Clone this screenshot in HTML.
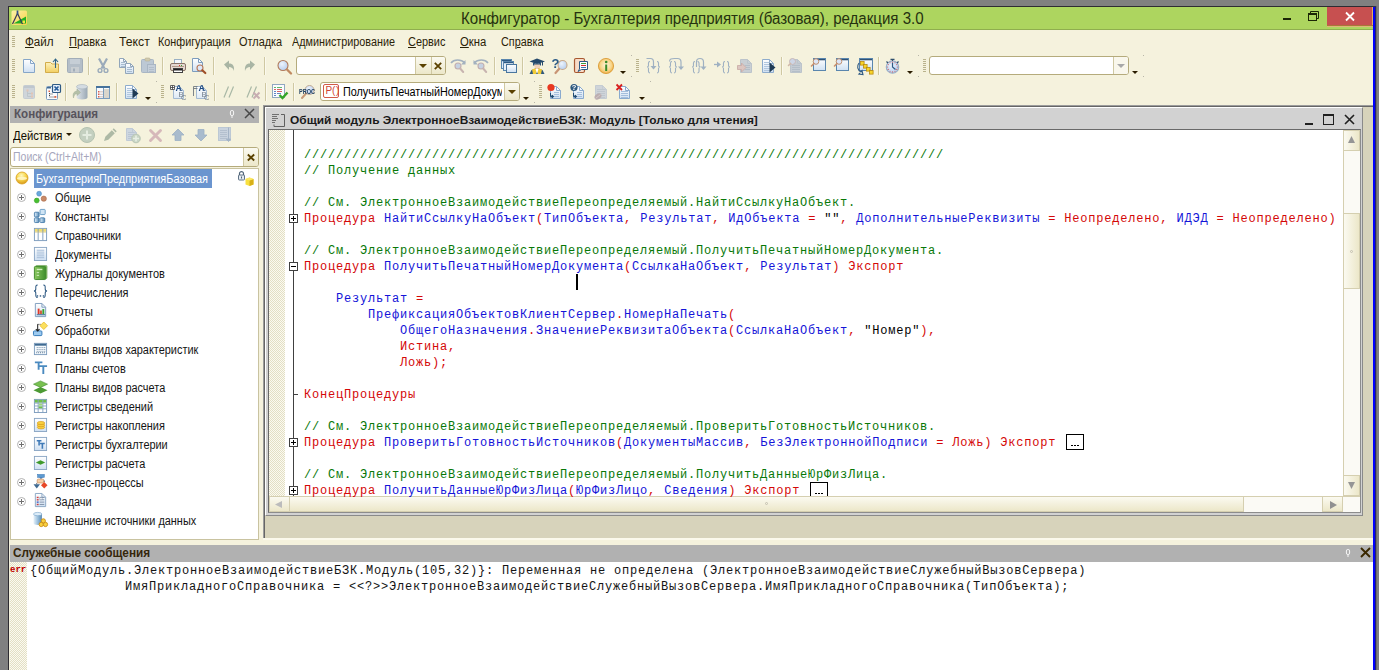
<!DOCTYPE html>
<html lang="ru">
<head>
<meta charset="utf-8">
<title>Конфигуратор</title>
<style>
*{box-sizing:border-box;margin:0;padding:0}
html,body{width:1379px;height:670px;overflow:hidden;background:#808080;font-family:"Liberation Sans",sans-serif;font-size:12px;color:#000}
div,pre,svg{position:absolute}
svg{overflow:visible}
#win{left:8px;top:6px;width:1365px;height:670px;background:#f5f2dd;border-left:1px solid #2e2c32;border-top:1px solid #2e2c32}
#blue{left:1373px;top:6px;width:2px;height:664px;border-top:1px solid #383838;background:#0000fe;box-shadow:1px 0 #24246c,2px 0 #6c6c6c}
#title{left:9px;top:7px;width:1364px;height:23px;background:#add55f;border-bottom:1px solid #8fae4e}
#title .t{left:452px;top:2px;font-size:16px;color:#263210;line-height:19px;white-space:nowrap;transform-origin:0 0;transform:scaleX(.9415)}
#close{left:1327px;top:7px;width:46px;height:18px;background:#c75050;border-right:1px solid #e0b060;box-shadow:0 1px #a87838,0 2px #e0b478}
.nx{white-space:nowrap;transform-origin:0 0;transform:scaleX(.9);line-height:14px;font-size:12px}
.menu{top:35px;color:#2a2208}
.menu u{text-decoration:underline}
.grip{width:3px;height:13px;background:repeating-linear-gradient(#b9b28c 0 1px,rgba(0,0,0,0) 1px 2px)}
.sep{width:2px;height:18px;border-left:1px solid #cfc8a2;border-right:1px solid #fbf9ee}
.dd{width:0;height:0;border-left:3px solid transparent;border-right:3px solid transparent;border-top:3px solid #2a1c00}
.dot{width:1px;height:1px;background:#b8b6a8}
.inp{background:#fff;border:1px solid #b5ab7c;border-radius:3px}
.btn{background:linear-gradient(#fbfaf1,#ece7c9);border-left:1px solid #cfc8a2}
/* left panel */
#lp-h{left:10px;top:106px;width:249px;height:17px;background:#b1b1b1}
#lp-tree{left:10px;top:168px;width:249px;height:372px;background:#fff;border:1px solid #c9c3a0}
.ti{left:55px;color:#141414}
.plus{left:17px;width:9px;height:9px;border:1px solid #b2b2b2;border-radius:50%;background:#fff}
.plus:before{content:"";position:absolute;left:1px;top:3px;width:5px;height:1px;background:#707070}
.plus:after{content:"";position:absolute;left:3px;top:1px;width:1px;height:5px;background:#707070}
/* code */
#mdi{left:263px;top:105px;width:1110px;height:433px;background:#d7d3bb;border-left:2px solid #666;border-top:2px solid #666}
#cw{left:265px;top:107px;width:1098px;height:409px;background:#d2d2d2;border-left:1px solid #fff;border-top:1px solid #fff;border-right:1px solid #8a8a8a;border-bottom:1px solid #8a8a8a}
#code{left:268px;top:129px;width:1093px;height:384px;background:#fff;border:1px solid #6a6a6a;border-right-color:#8c8c8c;border-bottom-color:#8c8c8c}
.stip{background-color:#fbfaf1;background-image:linear-gradient(45deg,#e3dfc4 25%,transparent 25%,transparent 75%,#e3dfc4 75%),linear-gradient(45deg,#e3dfc4 25%,transparent 25%,transparent 75%,#e3dfc4 75%);background-size:2px 2px;background-position:0 0,1px 1px}
#fold{left:293px;top:130px;width:1px;height:366px;background:#404040}
pre{font-family:"Liberation Mono",monospace;font-size:12px;letter-spacing:.8px;line-height:16px;white-space:pre}
#src{left:304px;top:147px}
.c{color:#087808}.k{color:#d40808}.i{color:#1414d8}.s{color:#000}
.fb{left:289px;width:9px;height:9px;border:1px solid #404040;background:#fff}
.fb:before{content:"";position:absolute;left:1px;top:3px;width:5px;height:1px;background:#000}
.fb.p:after{content:"";position:absolute;left:3px;top:1px;width:1px;height:5px;background:#000}
.dots{width:18px;height:16px;border:1px solid #000;background:#fff}
.dots:before{content:"";position:absolute;left:4px;top:10px;width:8px;height:1px;background:repeating-linear-gradient(90deg,#000 0 2px,transparent 2px 3px)}
.sbv{background:#fbfaf5;border-left:1px solid #d5cfb0}
.sbb{background:linear-gradient(90deg,#fbfaf1,#ece7c9);border:1px solid #d5cfb0}
/* bottom */
#bp-h{left:10px;top:545px;width:1363px;height:17px;background:#b1b1b1}
#bp{left:10px;top:562px;width:1363px;height:108px;background:#fff}
#msg{left:30px;top:563px;color:#141414}
</style>
</head>
<body>
<div id="win"></div>
<div id="title"><div class="t">Конфигуратор - Бухгалтерия предприятия (базовая), редакция 3.0</div></div>
<div id="close"></div>
<div id="blue"></div>

<svg width="0" height="0" style="left:0;top:0"><defs>
<linearGradient id="gp" x1="0" y1="0" x2="0" y2="1"><stop offset="0" stop-color="#ffffff"/><stop offset="1" stop-color="#cfe0f2"/></linearGradient>
<linearGradient id="gf" x1="0" y1="0" x2="0" y2="1"><stop offset="0" stop-color="#fdf2bc"/><stop offset="1" stop-color="#f2cf62"/></linearGradient>
<linearGradient id="gd" x1="0" y1="0" x2="1" y2="0"><stop offset="0" stop-color="#dfe5ea"/><stop offset="1" stop-color="#9aa8b4"/></linearGradient>
<radialGradient id="gl" cx="0.4" cy="0.35" r="0.7"><stop offset="0" stop-color="#eef4fc"/><stop offset="1" stop-color="#b5cdee"/></radialGradient>
<radialGradient id="gi" cx="0.5" cy="0.45" r="0.6"><stop offset="0" stop-color="#fff6dc"/><stop offset="0.6" stop-color="#f8d68a"/><stop offset="1" stop-color="#e8a030"/></radialGradient>
<radialGradient id="gb" cx="0.45" cy="0.3" r="0.7"><stop offset="0" stop-color="#fff8c0"/><stop offset="0.5" stop-color="#f8d850"/><stop offset="1" stop-color="#d89818"/></radialGradient>
<linearGradient id="gg" x1="0" y1="0" x2="1" y2="0"><stop offset="0" stop-color="#8cc860"/><stop offset="1" stop-color="#3f8f2c"/></linearGradient>
<linearGradient id="gc" x1="0" y1="0" x2="1" y2="0"><stop offset="0" stop-color="#e8f2fa"/><stop offset="0.5" stop-color="#9cc0dc"/><stop offset="1" stop-color="#5888b0"/></linearGradient>
<linearGradient id="gapp" x1="0" y1="0" x2="1" y2="1"><stop offset="0" stop-color="#fdf0a8"/><stop offset="1" stop-color="#f6d348"/></linearGradient>
<linearGradient id="gp2" x1="0" y1="0" x2="0" y2="1"><stop offset="0" stop-color="#ffffff"/><stop offset="1" stop-color="#dde9f5"/></linearGradient>
</defs></svg>
<svg style="left:11px;top:10px" width="16" height="15" viewBox="0 0 16 15"><rect x="0.5" y="0.5" width="15.5" height="14.5" rx="1.5" fill="url(#gapp)"/><path d="M2.5 13.5L15 6.5v7z" fill="#22b022"/><path d="M1.5 14L6.5 3.500 11.500 14" stroke="#3a3a58" stroke-width="1.200" fill="none"/><path d="M6.500 0.500v4" stroke="#30508a" stroke-width="1.700"/><rect x="11.500" y="10.500" width="2.500" height="2.500" fill="#f8e040"/></svg>
<div style="left:1283px;top:18px;width:8px;height:2px;background:#1c2606"></div>
<svg style="left:1308px;top:11px" width="11" height="10" viewBox="0 0 11 10"><path d="M2.500 2.500v-2h8v7h-2" fill="none" stroke="#1c2606"/><rect x="0.500" y="2.500" width="8" height="7" fill="none" stroke="#1c2606"/><rect x="0" y="2" width="9" height="2" fill="#1c2606"/></svg>
<svg style="left:1345px;top:12px" width="10" height="9" viewBox="0 0 10 9"><path d="M1 0.500l8 8M9 0.500l-8 8" stroke="#fff" stroke-width="1.800"/></svg>
<div class="grip" style="left:12px;top:36px;height:11px"></div>
<div class="nx menu" style="left:25px;transform:scaleX(0.97)"><u>Ф</u>айл</div>
<div class="nx menu" style="left:69px;transform:scaleX(0.92)"><u>П</u>равка</div>
<div class="nx menu" style="left:119px;transform:scaleX(1.02)">Текст</div>
<div class="nx menu" style="left:158px;transform:scaleX(0.9)">Конфигурация</div>
<div class="nx menu" style="left:239px;transform:scaleX(0.91)">Отладка</div>
<div class="nx menu" style="left:292px;transform:scaleX(0.9)">Администрирование</div>
<div class="nx menu" style="left:407.5px;transform:scaleX(0.91)"><u>С</u>ервис</div>
<div class="nx menu" style="left:459.5px;transform:scaleX(0.94)"><u>О</u>кна</div>
<div class="nx menu" style="left:500.5px;transform:scaleX(0.9)">Сп<u>р</u>авка</div>
<div class="grip" style="left:12px;top:59px"></div>
<svg style="left:21px;top:58px" width="16" height="16" viewBox="0 0 16 16"><path d="M2.5 1.5H9.5L13.5 5.5V14.5H2.5Z" fill="url(#gp)" stroke="#86a6c8" stroke-width="1"/><path d="M9.5 1.5V5.5H13.5" fill="none" stroke="#86a6c8" stroke-width="1"/></svg>
<svg style="left:44px;top:58px" width="16" height="16" viewBox="0 0 16 16"><path d="M1.5 4.500h5l1.500 1.500h6.500v8.500h-13z" fill="url(#gf)" stroke="#d2ac4a"/><path d="M11.5 10V1.5M9 4l2.5-3 2.5 3" fill="none" stroke="#2f6488" stroke-width="1.1"/></svg>
<svg style="left:67px;top:58px" width="16" height="16" viewBox="0 0 16 16"><rect x="0.5" y="0.5" width="15" height="14" rx="1" fill="#b4bec8" stroke="#a2adb8"/><rect x="3" y="1" width="10" height="5" fill="#c6ced6"/><rect x="4" y="9" width="8" height="5.5" fill="#c9ced2"/><rect x="6" y="10.5" width="2" height="3" fill="#a2adb8"/></svg>
<div class="sep" style="left:88px;top:57px"></div>
<svg style="left:95px;top:58px" width="16" height="16" viewBox="0 0 16 16"><path d="M4 0.5L9.5 10.5M12 0.5L6.5 10.5" stroke="#9aaaba" stroke-width="2.2" fill="none"/><circle cx="5" cy="12.5" r="1.9" fill="none" stroke="#9aaaba" stroke-width="1.4"/><circle cx="11" cy="12.5" r="1.9" fill="none" stroke="#9aaaba" stroke-width="1.4"/></svg>
<svg style="left:118px;top:58px" width="16" height="16" viewBox="0 0 16 16"><path d="M1.5 0.5H5.5L8.5 3.5V9.5H1.5Z" fill="url(#gp)" stroke="#92a6ba" stroke-width="1"/><path d="M5.5 0.5V3.5H8.5" fill="none" stroke="#92a6ba" stroke-width="1"/><rect x="3" y="4" width="4" height="1" fill="#a9bccf"/><rect x="3" y="6" width="4" height="1" fill="#a9bccf"/><rect x="3" y="8" width="4" height="1" fill="#a9bccf"/><path d="M7.5 5.5H12.5L15.5 8.5V15.5H7.5Z" fill="url(#gp)" stroke="#92a6ba" stroke-width="1"/><path d="M12.5 5.5V8.5H15.5" fill="none" stroke="#92a6ba" stroke-width="1"/><rect x="9" y="9" width="5" height="1" fill="#a9bccf"/><rect x="9" y="11" width="5" height="1" fill="#a9bccf"/><rect x="9" y="13" width="5" height="1" fill="#a9bccf"/></svg>
<svg style="left:141px;top:58px" width="16" height="16" viewBox="0 0 16 16"><rect x="0.5" y="1.5" width="12" height="13" rx="1" fill="#bcc8d4" stroke="#a9b6c4"/><rect x="4" y="0" width="5" height="3" rx="1" fill="#cfcab0" stroke="#b8b090" stroke-width=".6"/><rect x="6.5" y="6.5" width="8" height="8" fill="#c4ced9" stroke="#a9b6c4"/><rect x="8" y="9" width="5" height="1" fill="#b1bdca"/><rect x="8" y="11" width="5" height="1" fill="#b1bdca"/><rect x="8" y="13" width="5" height="1" fill="#b1bdca"/></svg>
<div class="sep" style="left:162px;top:57px"></div>
<svg style="left:170px;top:58px" width="16" height="16" viewBox="0 0 16 16"><rect x="4.5" y="1.5" width="7" height="5" fill="#f4f8fc" stroke="#9ab0c4"/><rect x="0.5" y="5.5" width="15" height="7" rx="1.5" fill="#e4d8d0" stroke="#8a7468"/><rect x="2" y="8" width="12" height="1" fill="#b09888"/><rect x="9" y="7" width="1" height="1" fill="#e03030"/><rect x="11" y="7" width="1" height="1" fill="#30a030"/><rect x="3.5" y="10.5" width="9" height="4" fill="#fff" stroke="#404040"/><rect x="4" y="11" width="8" height="1.5" fill="#202020"/></svg>
<svg style="left:191px;top:58px" width="16" height="16" viewBox="0 0 16 16"><path d="M1.5 0.5H7.5L11.5 4.5V13.5H1.5Z" fill="url(#gp)" stroke="#7d9cbd" stroke-width="1"/><path d="M7.5 0.5V4.5H11.5" fill="none" stroke="#7d9cbd" stroke-width="1"/><circle cx="9" cy="10" r="3" fill="#dce8f8" stroke="#b87858" stroke-width="1.1"/><path d="M11.3 12.3l3 2.700" stroke="#a05028" stroke-width="2.2" stroke-linecap="round"/></svg>
<div class="sep" style="left:213px;top:57px"></div>
<svg style="left:221px;top:58px" width="16" height="16" viewBox="0 0 16 16"><path d="M3 6.5L8 2.5v3c4 0 5.5 2.5 5 7.5-1-3-2.5-4-5-4v3z" fill="#a9b5a4"/></svg>
<svg style="left:242px;top:58px" width="16" height="16" viewBox="0 0 16 16"><path d="M13 6.5L8 2.5v3c-4 0-5.5 2.5-5 7.5 1-3 2.5-4 5-4v3z" fill="#a9b5a4"/></svg>
<div class="sep" style="left:264px;top:57px"></div>
<svg style="left:277px;top:59px" width="16" height="16" viewBox="0 0 16 16"><circle cx="6" cy="6.5" r="5" fill="url(#gl)" stroke="#b07a5c" stroke-width="1.1"/><path d="M10 10.5l4 4" stroke="#c08a62" stroke-width="2.4" stroke-linecap="round"/></svg>
<div class="inp" style="left:296px;top:56px;width:150px;height:19px"></div>
<div class="btn" style="left:415px;top:57px;width:16px;height:17px"></div><div class="btn" style="left:431px;top:57px;width:14px;height:17px;border-radius:0 2px 2px 0"></div>
<div class="dd" style="left:419px;top:64px;border-width:4px 4px 0 4px;border-top-color:#5a4100"></div>
<svg style="left:434px;top:62px" width="8" height="8" viewBox="0 0 8 8"><path d="M0.800 0.800l6.400 6.400M7.200 0.800l-6.400 6.400" stroke="#5a4100" stroke-width="1.800"/></svg>
<svg style="left:450px;top:58px" width="16" height="16" viewBox="0 0 16 16"><path d="M1 5c3-4 10-4 14 0" fill="none" stroke="#a3b1bf" stroke-width="1.6"/><path d="M15.5 2v4.5h-4.5z" fill="#a3b1bf"/><circle cx="8" cy="8" r="3" fill="#c6d2e2" stroke="#c0aeb0" stroke-width="1.1"/><path d="M10.2 10.5l3 3.5" stroke="#c8b4b0" stroke-width="2" stroke-linecap="round"/></svg>
<svg style="left:473px;top:58px" width="16" height="16" viewBox="0 0 16 16"><path d="M1 5c4-4 11-4 14 0" fill="none" stroke="#a3b1bf" stroke-width="1.6"/><path d="M0.5 2v4.5h4.5z" fill="#a3b1bf"/><circle cx="8" cy="8" r="3" fill="#c6d2e2" stroke="#c0aeb0" stroke-width="1.1"/><path d="M10.2 10.5l3 3.5" stroke="#c8b4b0" stroke-width="2" stroke-linecap="round"/></svg>
<div class="sep" style="left:494px;top:57px"></div>
<svg style="left:501px;top:58px" width="16" height="16" viewBox="0 0 16 16"><rect x="0.500" y="1.500" width="10" height="9" fill="#e2ecf6" stroke="#5a86ae"/><rect x="1" y="2" width="9" height="1.200" fill="#2f5a84"/><rect x="2.500" y="3.500" width="10" height="9" fill="#e8f0f8" stroke="#5a86ae"/><rect x="3" y="4" width="9" height="1.200" fill="#2f5a84"/><rect x="5.500" y="6.500" width="10" height="8" fill="url(#gp)" stroke="#4a769e"/></svg>
<div class="sep" style="left:522px;top:57px"></div>
<svg style="left:529px;top:58px" width="16" height="16" viewBox="0 0 16 16"><path d="M0.5 3.5L8 0.5l8 3-8 2.5z" fill="#24486a"/><path d="M4 4.5v3h8v-3l-4 1.5z" fill="#2c5478"/><path d="M5 6.5h6v3.5l-2 2.5h-2.5z" fill="#f2d2b8"/><path d="M0.5 16l2-4 4-1.5 1.5 2.5 1.5-2.5 4 1.5 2 4z" fill="#2f587e"/><path d="M3 11.5l3.5-1.3 1.5 2.8-1 3h-3zM13 11.5l-3.5-1.3-1.5 2.8 1 3h3z" fill="#f2cc38"/><path d="M6.5 11l1.5 5 1.5-5z" fill="#fff"/><path d="M13.5 3.5v4" stroke="#24486a"/></svg>
<svg style="left:552px;top:58px;will-change:transform" width="16" height="16" viewBox="0 0 16 16"><circle cx="10.5" cy="7" r="4.5" fill="url(#gl)" stroke="#c8a888" stroke-width="1.1"/><path d="M7 11l-3.5 4" stroke="#c89474" stroke-width="2.2" stroke-linecap="round"/><text x="-0.500" y="9.500" font-family="Liberation Sans,sans-serif" font-weight="bold" font-size="13" fill="#2a5a86">?</text></svg>
<svg style="left:574px;top:58px" width="16" height="16" viewBox="0 0 16 16"><rect x="0.5" y="0.5" width="10" height="14" rx="1.5" fill="#f8dcc8" stroke="#a85830" stroke-width="1.2"/><path d="M5.5 3.5h8v8h-6l-3.5 2 1.5-2.5z" fill="#fff" stroke="#2f5a84"/><rect x="7" y="5" width="5" height="1" fill="#3fa040"/><rect x="7" y="7" width="5" height="1" fill="#d03030"/><rect x="7" y="9" width="5" height="1" fill="#3f70b0"/></svg>
<svg style="left:598px;top:58px" width="16" height="16" viewBox="0 0 16 16"><circle cx="8" cy="8" r="7.6" fill="url(#gi)" stroke="#d8952c" stroke-width=".8"/><rect x="7.2" y="6.5" width="2" height="6.5" fill="#3a8a28"/><circle cx="8.2" cy="4" r="1.3" fill="#3a8a28"/></svg>
<div class="dd" style="left:620px;top:71px"></div>
<div class="dot" style="left:631px;top:55px"></div><div class="dot" style="left:631px;top:76px"></div>
<div class="grip" style="left:636px;top:59px"></div>
<svg style="left:646px;top:58px" width="16" height="16" viewBox="0 0 16 16"><path d="M0.5 0.5h4c2.5 0 3 1.5 3 3.500v5.500" fill="none" stroke="#9fb1c2" stroke-width="1.2"/><path d="M4.500 8h6l-3 3.500z" fill="#9fb1c2"/><path d="M4 3.500c-2 0-1.500 2.500-1.500 4 0 1-0.500 1.500-1.500 1.500 1 0 1.500 0.500 1.500 1.500 0 2-0.500 4.500 1.500 4.500M11 3.500c2 0 1.500 2.500 1.500 4 0 1 0.500 1.500 1.500 1.500-1 0-1.500 0.500-1.500 1.500 0 2 0.500 4.500-1.500 4.500" fill="none" stroke="#9fb1c2" stroke-width="1.1"/></svg>
<svg style="left:668px;top:58px" width="16" height="16" viewBox="0 0 16 16"><path d="M1.500 3.500c0-2.500 2-3 5-3h3c3 0 3.500 1.500 3.500 3.500v5.500" fill="none" stroke="#9fb1c2" stroke-width="1.2"/><path d="M10 8.500h6l-3 3.500z" fill="#9fb1c2"/><path d="M4 3.500c-2 0-1.500 2.500-1.500 4 0 1-0.500 1.500-1.500 1.500 1 0 1.500 0.500 1.500 1.500 0 2-0.500 4.500 1.500 4.500M6 3.500c2 0 1.500 2.500 1.500 4 0 1 0.500 1.500 1.500 1.500-1 0-1.500 0.500-1.500 1.500 0 2 0.500 4.500-1.500 4.500" fill="none" stroke="#9fb1c2" stroke-width="1.1"/></svg>
<svg style="left:691px;top:58px" width="16" height="16" viewBox="0 0 16 16"><path d="M5.500 9v-5c0-2.500 1-3.500 3.500-3.500s3.500 1 3.500 3.500v5" fill="none" stroke="#9fb1c2" stroke-width="1.2"/><path d="M9.500 8.500h6l-3 3.500z" fill="#9fb1c2"/><path d="M4 3.500c-2 0-1.500 2.500-1.500 4 0 1-0.500 1.500-1.500 1.500 1 0 1.500 0.500 1.500 1.500 0 2-0.500 4.500 1.500 4.500M6.500 3.500c2 0 1.500 2.500 1.500 4 0 1 0.500 1.500 1.500 1.500-1 0-1.500 0.500-1.500 1.500 0 2 0.500 4.500-1.500 4.500" fill="none" stroke="#9fb1c2" stroke-width="1.1"/></svg>
<svg style="left:714px;top:58px" width="16" height="16" viewBox="0 0 16 16"><path d="M0 6.500h4" stroke="#9fb1c2" stroke-width="1.3"/><path d="M3 3.500l4 3-4 3z" fill="#9fb1c2"/><path d="M11 3.500c-2 0-1.500 2.500-1.500 4 0 1-0.500 1.500-1.500 1.500 1 0 1.500 0.500 1.500 1.500 0 2-0.500 4.500 1.500 4.500M13 3.500c2 0 1.500 2.500 1.500 4 0 1 0.500 1.500 1.500 1.500-1 0-1.500 0.500-1.500 1.500 0 2 0.500 4.500-1.500 4.500" fill="none" stroke="#9fb1c2" stroke-width="1.1"/></svg>
<svg style="left:737px;top:58px" width="16" height="16" viewBox="0 0 16 16"><path d="M3.5 1.5H10.5L14.5 5.5V14.5H3.5Z" fill="#c9cfd4" stroke="#bcc4cb" stroke-width="1"/><path d="M10.5 1.5V5.5H14.5" fill="none" stroke="#bcc4cb" stroke-width="1"/><rect x="8" y="7" width="5" height="1" fill="#b4bec8"/><rect x="8" y="9" width="5" height="1" fill="#b4bec8"/><rect x="8" y="11" width="5" height="1" fill="#b4bec8"/><path d="M0.500 7.500h4v-2.500l4.500 4.500-4.500 4.500v-2.500h-4z" fill="#dcc6c0" stroke="#c8aaa4" stroke-width=".8"/></svg>
<svg style="left:761px;top:58px" width="16" height="16" viewBox="0 0 16 16"><path d="M1.5 1.5H8.5L12.5 5.5V14.5H1.5Z" fill="url(#gp)" stroke="#8eaccc" stroke-width="1"/><path d="M8.5 1.5V5.5H12.5" fill="none" stroke="#8eaccc" stroke-width="1"/><rect x="3" y="4" width="6" height="1" fill="#b0c6de"/><rect x="3" y="6" width="6" height="1" fill="#b0c6de"/><rect x="3" y="8" width="6" height="1" fill="#b0c6de"/><rect x="3" y="10" width="6" height="1" fill="#b0c6de"/><rect x="3" y="12" width="6" height="1" fill="#b0c6de"/><path d="M8.500 4.500l6 5-6 5z" fill="#1f3a54"/></svg>
<div class="sep" style="left:781px;top:57px"></div>
<svg style="left:788px;top:58px" width="16" height="16" viewBox="0 0 16 16"><path d="M2.5 1.5H9.5L13.5 5.5V14.5H2.5Z" fill="#c5ccd3" stroke="#bcc4cb" stroke-width="1"/><path d="M9.5 1.5V5.5H13.5" fill="none" stroke="#bcc4cb" stroke-width="1"/><rect x="4" y="7" width="8" height="1" fill="#b4bec8"/><rect x="4" y="9" width="8" height="1" fill="#b4bec8"/><rect x="4" y="11" width="8" height="1" fill="#b4bec8"/><rect x="4" y="13" width="8" height="1" fill="#b4bec8"/><circle cx="4.500" cy="3.500" r="3" fill="#cdd6e6" stroke="#c8b8b8" stroke-width="1"/><path d="M2.500 5.500l-2 2" stroke="#d0b8a8" stroke-width="1.6" stroke-linecap="round"/></svg>
<svg style="left:811px;top:58px" width="16" height="16" viewBox="0 0 16 16"><rect x="2.500" y="0.500" width="12" height="12" fill="url(#gp)" stroke="#5a86ae"/><rect x="3" y="1" width="11" height="1.300" fill="#2f5274"/><circle cx="5" cy="3.500" r="2.800" fill="#dce6f8" stroke="#c09070" stroke-width="1"/><path d="M3 5.500l-2.500 2.500" stroke="#c89070" stroke-width="1.600" stroke-linecap="round"/></svg>
<svg style="left:834px;top:58px" width="16" height="16" viewBox="0 0 16 16"><rect x="2.500" y="0.500" width="12" height="12" fill="url(#gp)" stroke="#5a86ae"/><rect x="3" y="1" width="11" height="1.300" fill="#2f5274"/><circle cx="5" cy="3.500" r="2.800" fill="#dce6f8" stroke="#c09070" stroke-width="1"/><path d="M3 5.500l-2.500 2.500" stroke="#c89070" stroke-width="1.600" stroke-linecap="round"/></svg>
<svg style="left:857px;top:58px" width="16" height="16" viewBox="0 0 16 16"><rect x="2.500" y="0.500" width="13" height="12" fill="url(#gp)" stroke="#5a86ae"/><rect x="3" y="1" width="12" height="1.300" fill="#2f5274"/><path d="M2 5c-2.500 3-1.500 7 2 9l1 -1.500 1 4-4-0.500 1-1" fill="none" stroke="#2f5a84" stroke-width="1.100"/><rect x="3.5" y="3.5" width="3.600" height="3.600" fill="#f8d428" stroke="#b88a10" stroke-width=".8"/><rect x="6.5" y="6.5" width="3.600" height="3.600" fill="#f8d428" stroke="#b88a10" stroke-width=".8"/><rect x="9.5" y="9.5" width="3.600" height="3.600" fill="#f8d428" stroke="#b88a10" stroke-width=".8"/><rect x="12.5" y="12.5" width="3.600" height="3.600" fill="#f8d428" stroke="#b88a10" stroke-width=".8"/></svg>
<div class="sep" style="left:878px;top:57px"></div>
<svg style="left:885px;top:58px" width="16" height="16" viewBox="0 0 16 16"><circle cx="7.500" cy="9" r="6.200" fill="url(#gl)" stroke="#9ab0c8" stroke-width="1.200"/><path d="M7.500 1v2M5.500 1.300h4M1.500 3.500l1.500 1.500M13.500 3.500l-1.500 1.500" stroke="#2f4f6c" stroke-width="1.200"/><path d="M7.500 4.500v4.500l3 2.500" fill="none" stroke="#2f5a84" stroke-width="1.200"/><circle cx="12.40" cy="9.00" r=".6" fill="#d06060"/><circle cx="11.74" cy="11.45" r=".6" fill="#d06060"/><circle cx="9.95" cy="13.24" r=".6" fill="#d06060"/><circle cx="7.50" cy="13.90" r=".6" fill="#d06060"/><circle cx="5.05" cy="13.24" r=".6" fill="#d06060"/><circle cx="3.26" cy="11.45" r=".6" fill="#d06060"/><circle cx="2.60" cy="9.00" r=".6" fill="#d06060"/><circle cx="3.26" cy="6.55" r=".6" fill="#d06060"/><circle cx="5.05" cy="4.76" r=".6" fill="#d06060"/><circle cx="7.50" cy="4.10" r=".6" fill="#d06060"/><circle cx="9.95" cy="4.76" r=".6" fill="#d06060"/><circle cx="11.74" cy="6.55" r=".6" fill="#d06060"/></svg>
<div class="dd" style="left:907px;top:71px"></div>
<div class="dot" style="left:918px;top:55px"></div><div class="dot" style="left:918px;top:76px"></div>
<div class="grip" style="left:923px;top:59px"></div>
<div class="inp" style="left:929px;top:56px;width:200px;height:19px"></div>
<div class="btn" style="left:1113px;top:57px;width:15px;height:17px;border-radius:0 2px 2px 0;background:#f9f7ec"></div>
<div class="dd" style="left:1117px;top:64px;border-width:4px 4px 0 4px;border-top-color:#a8a8a8"></div>
<div class="dd" style="left:1132px;top:71px"></div>
<div class="dot" style="left:1143px;top:55px"></div><div class="dot" style="left:1143px;top:76px"></div>
<div class="grip" style="left:12px;top:85px"></div>
<svg style="left:21px;top:84px" width="16" height="16" viewBox="0 0 16 16"><rect x="2.500" y="1.500" width="11" height="13" rx="1" fill="#cfd5da" stroke="#c5ccd2"/><rect x="3" y="2" width="10" height="2" fill="#bfc7ce"/><path d="M6.500 7v5.500h4M6.500 9.500h4" fill="none" stroke="#bcc4ca" stroke-width=".9"/><rect x="5.500" y="5.500" width="2" height="2" fill="#e2c4b4"/><rect x="10" y="8.500" width="2" height="2" fill="#e2c4b4"/><rect x="10" y="11.500" width="2" height="2" fill="#e2c4b4"/></svg>
<svg style="left:45px;top:84px" width="16" height="16" viewBox="0 0 16 16"><rect x="1.500" y="2.500" width="11" height="13" rx="1" fill="#fbfcfe" stroke="#7d9cbd"/><rect x="2" y="3" width="4" height="1.500" fill="#3f6a92"/><path d="M4.500 7v6h5M4.500 10h3" fill="none" stroke="#404040" stroke-width="1" stroke-dasharray="1 1"/><rect x="3.500" y="6.500" width="1.500" height="1.500" fill="#e06040"/><rect x="9.500" y="12" width="1.800" height="1.800" fill="#e06040"/><rect x="7.500" y="0.500" width="8" height="8" rx="1" fill="#e6f0fa" stroke="#2f5a84" stroke-width="1.200"/><path d="M9.500 2.500l4 4M13.500 2.500l-4 4" stroke="#245a9a" stroke-width="1.600"/></svg>
<div class="sep" style="left:65px;top:83px"></div>
<svg style="left:72px;top:84px" width="16" height="16" viewBox="0 0 16 16"><path d="M4.500 2.500v11c0 1.300 2.500 2 5.500 2s5.500-.700 5.500-2v-11z" fill="url(#gd)"/><ellipse cx="10" cy="2.700" rx="5.500" ry="2.200" fill="#d4dce2" stroke="#a6b2bc" stroke-width=".6"/><path d="M1.500 14c-1-4 0-6.500 3.500-7v-2l3.500 3.500-3.500 3v-2c-2 .3-3 1.500-3.500 4.500z" fill="#b4c0a8" stroke="#a0ac94" stroke-width=".5"/></svg>
<svg style="left:95px;top:84px" width="16" height="16" viewBox="0 0 16 16"><rect x="1.500" y="2.500" width="13" height="12" fill="#f8fafd" stroke="#7a9cbd"/><rect x="1" y="2" width="14" height="2" fill="#46729c"/><rect x="8.500" y="5" width="5.500" height="9" fill="#dad6cc"/><path d="M8.500 4v10.500" stroke="#7a9cbd"/><rect x="3" y="7.0" width="1.500" height="1.500" fill="#d86050"/><rect x="5" y="7.3" width="3" height="1" fill="#d4c0b8"/><rect x="3" y="9.5" width="1.500" height="1.500" fill="#d86050"/><rect x="5" y="9.8" width="3" height="1" fill="#d4c0b8"/><rect x="3" y="12.0" width="1.500" height="1.500" fill="#d86050"/><rect x="5" y="12.3" width="3" height="1" fill="#d4c0b8"/></svg>
<div class="sep" style="left:116px;top:83px"></div>
<svg style="left:124px;top:84px" width="16" height="16" viewBox="0 0 16 16"><path d="M1.5 1.5H8.5L12.5 5.5V14.5H1.5Z" fill="url(#gp)" stroke="#8eaccc" stroke-width="1"/><path d="M8.5 1.5V5.5H12.5" fill="none" stroke="#8eaccc" stroke-width="1"/><rect x="3" y="4" width="6" height="1" fill="#b0c6de"/><rect x="3" y="6" width="6" height="1" fill="#b0c6de"/><rect x="3" y="8" width="6" height="1" fill="#b0c6de"/><rect x="3" y="10" width="6" height="1" fill="#b0c6de"/><rect x="3" y="12" width="6" height="1" fill="#b0c6de"/><path d="M8.500 4.500l6 5-6 5z" fill="#1f3a54"/></svg>
<div class="dd" style="left:145px;top:97px"></div>
<div class="dot" style="left:156px;top:81px"></div><div class="dot" style="left:156px;top:102px"></div>
<div class="grip" style="left:161px;top:85px"></div>
<svg style="left:170px;top:84px;will-change:transform" width="16" height="16" viewBox="0 0 16 16"><path d="M3.5 2.5H9.5L13.5 6.5V14.5H3.5Z" fill="url(#gp2)" stroke="#a4bad2" stroke-width="1"/><path d="M9.5 2.5V6.5H13.5" fill="none" stroke="#a4bad2" stroke-width="1"/><path d="M0.500 1.500h4v4h-4zM2.500 1.500v4M0.500 3.500h4" fill="#fff" stroke="#404040" stroke-width=".8"/><text x="5.500" y="7" font-family="Liberation Sans,sans-serif" font-weight="bold" font-size="9" fill="#1f4a80">A</text><text x="8.500" y="12.500" font-family="Liberation Sans,sans-serif" font-size="8" fill="#76828f">B</text><text x="11" y="16" font-family="Liberation Sans,sans-serif" font-size="7.500" fill="#76828f">C</text></svg>
<svg style="left:193px;top:84px;will-change:transform" width="16" height="16" viewBox="0 0 16 16"><path d="M3.5 2.5H9.5L13.5 6.5V14.5H3.5Z" fill="url(#gp2)" stroke="#a4bad2" stroke-width="1"/><path d="M9.5 2.5V6.5H13.5" fill="none" stroke="#a4bad2" stroke-width="1"/><path d="M4.500 2.500h-4v9.500M0.500 4.500h4" fill="none" stroke="#707880" stroke-width=".9"/><text x="5.500" y="7" font-family="Liberation Sans,sans-serif" font-weight="bold" font-size="9" fill="#1f4a80">A</text><text x="8.500" y="12.500" font-family="Liberation Sans,sans-serif" font-size="8" fill="#76828f">B</text><text x="11" y="16" font-family="Liberation Sans,sans-serif" font-size="7.500" fill="#76828f">C</text></svg>
<div class="sep" style="left:214px;top:83px"></div>
<svg style="left:221px;top:84px" width="16" height="16" viewBox="0 0 16 16"><path d="M7.500 2.500l-4.500 11M12.500 2.500l-4.500 11" stroke="#a9b8a6" stroke-width="1.200" fill="none"/></svg>
<svg style="left:245px;top:84px" width="16" height="16" viewBox="0 0 16 16"><path d="M6.500 2.500l-4.500 11M11.500 2.500l-4.500 11" stroke="#a9b8a6" stroke-width="1.200" fill="none"/><path d="M8.500 8.500l6 6M14.500 8.500l-6 6" stroke="#c8aeb2" stroke-width="2"/></svg>
<div class="sep" style="left:265px;top:83px"></div>
<svg style="left:272px;top:84px" width="16" height="16" viewBox="0 0 16 16"><rect x="0.500" y="0.500" width="12" height="13" fill="#fbfcfe" stroke="#90a8c0"/><g opacity=".75"><rect x="2" y="3" width="2" height="1" fill="#30a040"/><rect x="5" y="3" width="5" height="1" fill="#30a040"/><rect x="2" y="5" width="2" height="1" fill="#d03030"/><rect x="5" y="5" width="5" height="1" fill="#d03030"/><rect x="2" y="7" width="2" height="1" fill="#3060b0"/><rect x="5" y="7" width="5" height="1" fill="#d03030"/><rect x="2" y="9" width="2" height="1" fill="#3060b0"/><rect x="5" y="9" width="4" height="1" fill="#3060b0"/><rect x="2" y="11" width="2" height="1" fill="#3060b0"/></g><path d="M7.500 11l3 3 5-5.500" fill="none" stroke="#35a528" stroke-width="2.400"/></svg>
<div class="sep" style="left:293px;top:83px"></div>
<svg style="left:299px;top:84px;will-change:transform" width="16" height="16" viewBox="0 0 16 16"><circle cx="10.500" cy="6" r="4.500" fill="url(#gl)" stroke="#c0a890" stroke-width="1"/><path d="M7 9.500l-4 4.500" stroke="#c89a78" stroke-width="2" stroke-linecap="round"/><text x="0" y="10" font-family="Liberation Sans,sans-serif" font-weight="bold" font-size="6.500" fill="#1f3f60" textLength="16" lengthAdjust="spacingAndGlyphs">PROC</text></svg>
<div class="inp" style="left:320px;top:82px;width:200px;height:19px"></div>
<div style="left:323px;top:84px;width:16px;height:14px;border:1px solid #d25a48;border-radius:2px;background:#fff"></div><div style="left:325.500px;top:85px;font-size:10px;line-height:12px;color:#d04634;letter-spacing:-.3px;white-space:nowrap">P<span style="letter-spacing:.800px">()</span></div>
<div style="left:343px;top:83px;width:159px;height:17px;overflow:hidden"><div class="nx" style="left:0;top:2px;color:#000">ПолучитьПечатныйНомерДокумента</div></div>
<div class="btn" style="left:504px;top:83px;width:15px;height:17px;border-radius:0 2px 2px 0"></div>
<div class="dd" style="left:508px;top:90px;border-width:4px 4px 0 4px;border-top-color:#5a4100"></div>
<div class="dd" style="left:523px;top:97px"></div>
<div class="dot" style="left:534px;top:81px"></div><div class="dot" style="left:534px;top:102px"></div>
<div class="grip" style="left:539px;top:85px"></div>
<svg style="left:547px;top:84px" width="16" height="16" viewBox="0 0 16 16"><path d="M3.5 2.5H9.5L13.5 6.5V14.5H3.5Z" fill="url(#gp)" stroke="#8aaace" stroke-width="1"/><path d="M9.5 2.5V6.5H13.5" fill="none" stroke="#8aaace" stroke-width="1"/><rect x="7" y="8" width="5" height="1" fill="#a4bedc"/><rect x="7" y="10" width="5" height="1" fill="#a4bedc"/><rect x="7" y="12" width="5" height="1" fill="#a4bedc"/><path d="M3.500 9v3.500h3M5 11l1.800 1.500-1.800 1.500z" fill="none" stroke="#1f4a70" stroke-width="1"/><circle cx="4" cy="3.500" r="3.600" fill="#e83820"/></svg>
<svg style="left:570px;top:84px;will-change:transform" width="16" height="16" viewBox="0 0 16 16"><path d="M3.5 2.5H9.5L13.5 6.5V14.5H3.5Z" fill="url(#gp)" stroke="#8aaace" stroke-width="1"/><path d="M9.5 2.5V6.5H13.5" fill="none" stroke="#8aaace" stroke-width="1"/><rect x="7" y="8" width="5" height="1" fill="#a4bedc"/><rect x="7" y="10" width="5" height="1" fill="#a4bedc"/><rect x="7" y="12" width="5" height="1" fill="#a4bedc"/><path d="M3.500 9v3.500h3M5 11l1.800 1.500-1.800 1.500z" fill="none" stroke="#1f4a70" stroke-width="1"/><circle cx="4" cy="3.500" r="3.600" fill="#2f5a80"/><text x="1.800" y="6.300" font-family="Liberation Sans,sans-serif" font-weight="bold" font-size="7.500" fill="#fff">?</text></svg>
<svg style="left:593px;top:84px" width="16" height="16" viewBox="0 0 16 16"><path d="M2.5 1.5H9.5L13.5 5.5V14.5H2.5Z" fill="#cfd4d9" stroke="#c5ccd2" stroke-width="1"/><path d="M9.5 1.5V5.5H13.5" fill="none" stroke="#c5ccd2" stroke-width="1"/><rect x="4" y="5" width="8" height="1" fill="#bfc7ce"/><rect x="4" y="7" width="8" height="1" fill="#bfc7ce"/><rect x="4" y="9" width="8" height="1" fill="#bfc7ce"/><rect x="4" y="11" width="8" height="1" fill="#bfc7ce"/><rect x="4" y="13" width="8" height="1" fill="#bfc7ce"/><ellipse cx="5" cy="12.500" rx="3.800" ry="2.600" transform="rotate(-35 5 12.500)" fill="#bcaeb0"/><path d="M2.500 14.500l5-4" stroke="#d4c8c8" stroke-width="1"/></svg>
<svg style="left:616px;top:84px" width="16" height="16" viewBox="0 0 16 16"><path d="M3.5 2.5H9.5L13.5 6.5V14.5H3.5Z" fill="url(#gp)" stroke="#8aaace" stroke-width="1"/><path d="M9.5 2.5V6.5H13.5" fill="none" stroke="#8aaace" stroke-width="1"/><rect x="5" y="7" width="7" height="1" fill="#a4bedc"/><rect x="5" y="9" width="7" height="1" fill="#a4bedc"/><rect x="5" y="11" width="7" height="1" fill="#a4bedc"/><rect x="5" y="13" width="7" height="1" fill="#a4bedc"/><path d="M0.500 0.500l5.500 5.500M6 0.500l-5.500 5.500" stroke="#d82020" stroke-width="1.800"/></svg>
<div class="dd" style="left:639px;top:97px"></div>
<div class="dot" style="left:650px;top:81px"></div><div class="dot" style="left:650px;top:102px"></div>
<div id="lp-h"><div class="nx" style="left:4px;top:1px;font-weight:bold;color:#57535c;transform:scaleX(.965)">Конфигурация</div></div>
<svg style="left:229px;top:109.500px" width="6" height="9" viewBox="0 0 6 9"><rect x="1.400" y="0.500" width="3.200" height="5" rx="1.400" fill="none" stroke="#fff" stroke-width=".9"/><path d="M3 5.500v2.500" stroke="#fff" stroke-width=".9"/></svg>
<svg style="left:244px;top:108px" width="11" height="11" viewBox="0 0 11 11"><path d="M1 1l9 9M10 1l-9 9" stroke="#484848" stroke-width="1.500"/></svg>
<div class="nx" style="left:13px;top:129px;color:#100c00;transform:scaleX(.94)">Действия</div>
<div class="dd" style="left:66px;top:133px"></div>
<svg style="left:79px;top:127px" width="16" height="16" viewBox="0 0 16 16"><circle cx="8" cy="8" r="7.500" fill="#c4d0c0" stroke="#b4c2b0"/><path d="M8 3.500v9M3.500 8h9" stroke="#e4ece0" stroke-width="2"/></svg>
<svg style="left:102px;top:127px" width="16" height="16" viewBox="0 0 16 16"><path d="M2 14l1.300-4.300 6.500-6.500 3 3-6.500 6.500z" fill="#adb9a5"/><path d="M10.600 2.400l1.100-1.100 3 3-1.100 1.100z" fill="#adb9a5"/></svg>
<svg style="left:125px;top:127px" width="16" height="16" viewBox="0 0 16 16"><path d="M1.5 1.5H7.5L11.5 5.5V13.5H1.5Z" fill="#cdd6e0" stroke="#c0cad6" stroke-width="1"/><path d="M7.5 1.5V5.5H11.5" fill="none" stroke="#c0cad6" stroke-width="1"/><rect x="3" y="5" width="6" height="1" fill="#bac6d4"/><rect x="3" y="7" width="6" height="1" fill="#bac6d4"/><rect x="3" y="9" width="6" height="1" fill="#bac6d4"/><rect x="3" y="11" width="6" height="1" fill="#bac6d4"/><circle cx="11" cy="11.500" r="4.300" fill="#c8d4c4" stroke="#b8c6b4"/><path d="M11 8.500v6M8 11.500h6" stroke="#e8efe4" stroke-width="1.600"/></svg>
<svg style="left:148px;top:127px" width="16" height="16" viewBox="0 0 16 16"><path d="M2.500 3.500l10 10M12.500 3.500l-10 10" stroke="#d6b8ba" stroke-width="2.900" stroke-linecap="round"/></svg>
<svg style="left:170px;top:127px" width="16" height="16" viewBox="0 0 16 16"><path d="M8 2l6 6h-3v5.500h-6v-5.500h-3z" fill="#a9bbcd" stroke="#9cb0c4" stroke-width=".8"/></svg>
<svg style="left:193px;top:127px" width="16" height="16" viewBox="0 0 16 16"><path d="M8 14l6-6h-3v-5.500h-6v5.500h-3z" fill="#a9bbcd" stroke="#9cb0c4" stroke-width=".8"/></svg>
<svg style="left:217px;top:127px" width="16" height="16" viewBox="0 0 16 16"><rect x="1.500" y="0.500" width="12" height="13" fill="#c9d3de" stroke="#bcc8d4"/><rect x="3" y="3" width="7" height="1" fill="#b4c0ce"/><rect x="3" y="5" width="7" height="1" fill="#b4c0ce"/><rect x="3" y="7" width="7" height="1" fill="#b4c0ce"/><rect x="3" y="9" width="7" height="1" fill="#b4c0ce"/><rect x="3" y="11" width="7" height="1" fill="#b4c0ce"/><path d="M11.500 0.500v13M9.500 12h4l-2 2.500z" stroke="#a4b4c6" fill="#a4b4c6" stroke-width="1"/></svg>
<div class="inp" style="left:10px;top:147px;width:249px;height:20px"></div>
<div class="nx" style="left:12.500px;top:150px;color:#a6a6bc;transform:scaleX(.875)">Поиск (Ctrl+Alt+M)</div>
<div class="btn" style="left:243px;top:148px;width:15px;height:18px;border-radius:0 2px 2px 0"></div>
<svg style="left:247px;top:154px" width="8" height="7" viewBox="0 0 8 7"><path d="M0.800 0.500l6.400 6M7.200 0.500l-6.400 6" stroke="#5a4100" stroke-width="1.800"/></svg>
<div id="lp-tree"></div>
<div style="left:34px;top:169px;width:178px;height:19px;background:#6b95cf"></div>
<svg style="left:14px;top:170px" width="16" height="16" viewBox="0 0 16 16"><circle cx="8" cy="8" r="6" fill="url(#gb)" stroke="#d8a020" stroke-width=".8"/><ellipse cx="8" cy="8.300" rx="5" ry="1.600" fill="#fff6c8" opacity=".9"/></svg>
<div class="nx" style="left:36px;top:172px;color:#fff;transform:scaleX(.91)">БухгалтерияПредприятияБазовая</div>
<svg style="left:238px;top:171px" width="7" height="10" viewBox="0 0 7 10"><path d="M1.500 4.500v-2c0-2.500 4-2.500 4 0v2" fill="none" stroke="#4f6478" stroke-width="1.200"/><rect x="0.500" y="4" width="6" height="5" rx=".8" fill="#e4eaf0" stroke="#4f6478" stroke-width=".9"/><rect x="3" y="5.500" width="1" height="2" fill="#4f6478"/></svg>
<svg style="left:245px;top:177px" width="9" height="10" viewBox="0 0 9 10"><path d="M0.500 2l4-1.500 4 1.500v5.500l-4 1.500-4-1.500z" fill="#f8e040"/><path d="M4.500 3.500l4-1.500v5.500l-4 1.500z" fill="#d8b018"/><path d="M0.500 2l4 1.500 4-1.500-4-1.500z" fill="#fbe868"/></svg>
<div class="plus" style="top:193px"></div>
<svg style="left:33px;top:189px" width="15" height="15" viewBox="0 0 16 16"><circle cx="6.500" cy="5" r="2.600" fill="#6aa8dc" stroke="#4a88c0" stroke-width=".6"/><circle cx="4" cy="12.300" r="2.600" fill="#48c030" stroke="#2e9a1c" stroke-width=".6"/><circle cx="11.500" cy="10.300" r="2.800" fill="#c88a68" stroke="#a86848" stroke-width=".6"/></svg>
<div class="nx ti" style="top:191px;transform:scaleX(.91)">Общие</div>
<div class="plus" style="top:212px"></div>
<svg style="left:33px;top:208px" width="15" height="15" viewBox="0 0 16 16"><rect x="1.5" y="4.5" width="5" height="5" rx=".8" fill="url(#gc)" stroke="#3f78a8" stroke-width=".9"/><rect x="1.5" y="10.5" width="5" height="5" rx=".8" fill="url(#gc)" stroke="#3f78a8" stroke-width=".9"/><rect x="7.5" y="10.5" width="5" height="5" rx=".8" fill="url(#gc)" stroke="#3f78a8" stroke-width=".9"/><rect x="7.500" y="1.500" width="5.500" height="5.500" rx=".8" fill="#cfe4f4" stroke="#5c94c0" stroke-width=".9"/></svg>
<div class="nx ti" style="top:210px;transform:scaleX(.91)">Константы</div>
<div class="plus" style="top:231px"></div>
<svg style="left:33px;top:227px" width="15" height="15" viewBox="0 0 16 16"><rect x="1.500" y="1.500" width="13" height="13" fill="#fff" stroke="#7d9cbd"/><rect x="2" y="2" width="12" height="3" fill="#f0dc70"/><path d="M5.500 2v12M10.500 2v12" stroke="#7d9cbd"/><path d="M2 5.500h12" stroke="#c8b860" stroke-width=".6"/></svg>
<div class="nx ti" style="top:229px;transform:scaleX(.91)">Справочники</div>
<div class="plus" style="top:250px"></div>
<svg style="left:33px;top:246px" width="15" height="15" viewBox="0 0 16 16"><rect x="1.500" y="1.500" width="13" height="14" fill="url(#gp)" stroke="#8aa6c4"/><rect x="4" y="4" width="8" height="1" fill="#a4bcd8"/><rect x="4" y="6" width="8" height="1" fill="#a4bcd8"/><rect x="4" y="8" width="8" height="1" fill="#a4bcd8"/><rect x="4" y="10" width="8" height="1" fill="#a4bcd8"/><rect x="4" y="12" width="8" height="1" fill="#a4bcd8"/></svg>
<div class="nx ti" style="top:248px;transform:scaleX(.91)">Документы</div>
<div class="plus" style="top:269px"></div>
<svg style="left:33px;top:265px" width="15" height="15" viewBox="0 0 16 16"><rect x="3" y="0.500" width="12" height="14" rx="1" fill="#8cc070" stroke="#6aa050" stroke-width=".6"/><rect x="1.500" y="1.500" width="12" height="14" rx="1" fill="url(#gg)" stroke="#3f8a2c"/><rect x="4" y="4" width="6" height="1.500" fill="#d4f0c0"/><rect x="4" y="7.500" width="2.500" height="1.200" fill="#c4e8b0"/><rect x="4" y="10.500" width="2.500" height="1.200" fill="#c4e8b0"/></svg>
<div class="nx ti" style="top:267px;transform:scaleX(.91)">Журналы документов</div>
<div class="plus" style="top:288px"></div>
<svg style="left:33px;top:284px" width="15" height="15" viewBox="0 0 16 16"><path d="M5 1c-2.500 0-2 2.500-2 4 0 1.500-.500 2.500-2 2.500 1.500 0 2 1 2 2.500 0 1.500-.500 4.500 2 4.500M11 1c2.500 0 2 2.500 2 4 0 1.500.500 2.500 2 2.500-1.500 0-2 1-2 2.500 0 1.500.500 4.500-2 4.500" fill="none" stroke="#2f5a84" stroke-width="1.100"/><rect x="4" y="12" width="1.500" height="1.500" fill="#2f5a84"/><rect x="7.200" y="12" width="1.500" height="1.500" fill="#2f5a84"/><rect x="10.400" y="12" width="1.500" height="1.500" fill="#2f5a84"/></svg>
<div class="nx ti" style="top:286px;transform:scaleX(.91)">Перечисления</div>
<div class="plus" style="top:307px"></div>
<svg style="left:33px;top:303px" width="15" height="15" viewBox="0 0 16 16"><path d="M2.5 0.5H9.5L13.5 4.5V14.5H2.5Z" fill="url(#gp)" stroke="#7d9cbd" stroke-width="1"/><path d="M9.5 0.5V4.5H13.5" fill="none" stroke="#7d9cbd" stroke-width="1"/><rect x="5" y="6" width="2" height="6" fill="#e03828"/><rect x="7.500" y="8" width="2" height="4" fill="#d05838"/><rect x="10" y="6.500" width="2" height="5.500" fill="#38a030"/><rect x="4" y="12" width="9" height="1" fill="#3f6a92"/></svg>
<div class="nx ti" style="top:305px;transform:scaleX(.91)">Отчеты</div>
<div class="plus" style="top:326px"></div>
<svg style="left:33px;top:322px" width="15" height="15" viewBox="0 0 16 16"><rect x="0.500" y="9.500" width="9" height="5" rx="1" fill="#9ccaf0" stroke="#2f78b8"/><path d="M5 2.500v7M3 7.500l2 2 2-2" fill="none" stroke="#202020" stroke-width="1.100"/><path d="M5 2.500h4" stroke="#202020" stroke-dasharray="1 1"/><path d="M11.500 0l4 4-4 4-4-4z" fill="#fbe060" stroke="#e8b820" stroke-width=".8"/></svg>
<div class="nx ti" style="top:324px;transform:scaleX(.91)">Обработки</div>
<div class="plus" style="top:345px"></div>
<svg style="left:33px;top:341px" width="15" height="15" viewBox="0 0 16 16"><rect x="1.500" y="2.500" width="13" height="12" fill="#f6fafd" stroke="#7d9cbd"/><rect x="2" y="3" width="12" height="2" fill="#3f6a92"/><path d="M4.5 6.500v6" stroke="#4a6a8a" stroke-width=".8" stroke-dasharray="1 1"/><path d="M6.5 6.500v6" stroke="#4a6a8a" stroke-width=".8" stroke-dasharray="1 1"/><path d="M8.5 6.500v6" stroke="#4a6a8a" stroke-width=".8" stroke-dasharray="1 1"/><path d="M10.5 6.500v6" stroke="#4a6a8a" stroke-width=".8" stroke-dasharray="1 1"/><path d="M12.5 6.500v6" stroke="#4a6a8a" stroke-width=".8" stroke-dasharray="1 1"/><path d="M3.500 12.500h9" stroke="#4a6a8a" stroke-dasharray="1 1"/></svg>
<div class="nx ti" style="top:343px;transform:scaleX(.91)">Планы видов характеристик</div>
<div class="plus" style="top:364px"></div>
<svg style="left:33px;top:360px" width="15" height="15" viewBox="0 0 16 16"><path d="M2 2.500h8M6 2.500v8M7 6.500h8M11 6.500v8.500" stroke="#4a8ac0" stroke-width="2" fill="none"/></svg>
<div class="nx ti" style="top:362px;transform:scaleX(.91)">Планы счетов</div>
<div class="plus" style="top:383px"></div>
<svg style="left:33px;top:379px" width="15" height="15" viewBox="0 0 16 16"><path d="M8 8.500l7.500 3.500-7.500 3.500-7.500-3.500z" fill="#4c9a34"/><path d="M8 2l7.500 3.500-7.500 3.500-7.500-3.500z" fill="#78c050" stroke="#3f8a2c" stroke-width=".6"/></svg>
<div class="nx ti" style="top:381px;transform:scaleX(.91)">Планы видов расчета</div>
<div class="plus" style="top:402px"></div>
<svg style="left:33px;top:398px" width="15" height="15" viewBox="0 0 16 16"><rect x="1.500" y="1.500" width="13" height="14" fill="#fff" stroke="#7d9cbd"/><rect x="2" y="2" width="12" height="3" fill="#70c048"/><path d="M2 5.500h12M2 8.500h12M2 11.500h12M5.500 2v13M10.500 2v13" stroke="#8aa6c4"/><rect x="6" y="6" width="4" height="2" fill="#a0d880"/><rect x="6" y="9" width="4" height="2" fill="#70c048"/></svg>
<div class="nx ti" style="top:400px;transform:scaleX(.91)">Регистры сведений</div>
<div class="plus" style="top:421px"></div>
<svg style="left:33px;top:417px" width="15" height="15" viewBox="0 0 16 16"><rect x="1.500" y="1.500" width="13" height="14" fill="url(#gp)" stroke="#8aa6c4"/><ellipse cx="8.500" cy="11.0" rx="4" ry="1.700" fill="#f8d040" stroke="#d89a18" stroke-width=".7"/><ellipse cx="8.500" cy="8.7" rx="4" ry="1.700" fill="#f8d040" stroke="#d89a18" stroke-width=".7"/><ellipse cx="8.500" cy="6.4" rx="4" ry="1.700" fill="#f8d040" stroke="#d89a18" stroke-width=".7"/></svg>
<div class="nx ti" style="top:419px;transform:scaleX(.91)">Регистры накопления</div>
<div class="plus" style="top:440px"></div>
<svg style="left:33px;top:436px" width="15" height="15" viewBox="0 0 16 16"><rect x="1.500" y="1.500" width="13" height="14" fill="url(#gp)" stroke="#8aa6c4"/><path d="M4 5h5M6.500 5v5M7.500 8h5M10 8v5.500" stroke="#3f7ab8" stroke-width="1.700" fill="none"/></svg>
<div class="nx ti" style="top:438px;transform:scaleX(.91)">Регистры бухгалтерии</div>
<svg style="left:33px;top:455px" width="15" height="15" viewBox="0 0 16 16"><rect x="1.500" y="1.500" width="13" height="14" fill="url(#gp)" stroke="#8aa6c4"/><path d="M8 5.500l5 2.500-5 2.500-5-2.500z" fill="#3f9a2c"/></svg>
<div class="nx ti" style="top:457px;transform:scaleX(.91)">Регистры расчета</div>
<div class="plus" style="top:478px"></div>
<svg style="left:33px;top:474px" width="15" height="15" viewBox="0 0 16 16"><rect x="5" y="0.500" width="7" height="3" fill="#5c9ad0" stroke="#3f7ab8" stroke-width=".6"/><path d="M6.500 3.500h4l-2 2z" fill="#3f7ab8"/><rect x="4.500" y="5.500" width="7" height="4" rx="1" fill="#f8d0a8" stroke="#d8a070"/><path d="M0.500 11h7l-3.500 4.500z" fill="#3f6a92"/><path d="M12 8.500l3.500 3.500-3.500 3.500-3.500-3.500z" fill="#e84828"/><path d="M4 9.500v1.500M12 7v1.500" stroke="#606060"/></svg>
<div class="nx ti" style="top:476px;transform:scaleX(.91)">Бизнес-процессы</div>
<div class="plus" style="top:497px"></div>
<svg style="left:33px;top:493px" width="15" height="15" viewBox="0 0 16 16"><path d="M2.5 0.5H9.5L13.5 4.5V14.5H2.5Z" fill="url(#gp)" stroke="#8aa6c4" stroke-width="1"/><path d="M9.5 0.5V4.5H13.5" fill="none" stroke="#8aa6c4" stroke-width="1"/><rect x="4" y="4.0" width="2" height="1.500" fill="#d04040"/><rect x="7" y="4.2" width="5" height="1" fill="#8090a8"/><rect x="4" y="6.5" width="2" height="1.500" fill="#d04040"/><rect x="7" y="6.7" width="5" height="1" fill="#8090a8"/><rect x="4" y="9.0" width="2" height="1.500" fill="#4060c0"/><rect x="7" y="9.2" width="5" height="1" fill="#8090a8"/><rect x="4" y="11.5" width="2" height="1.500" fill="#d04040"/><rect x="7" y="11.7" width="5" height="1" fill="#8090a8"/><circle cx="8.500" cy="6" r="1.300" fill="#fff" stroke="#8090a8" stroke-width=".6"/></svg>
<div class="nx ti" style="top:495px;transform:scaleX(.91)">Задачи</div>
<svg style="left:33px;top:512px" width="15" height="15" viewBox="0 0 16 16"><path d="M0.500 2v10c0 1 2 1.800 4.500 1.800s4.500-.800 4.500-1.800v-10z" fill="url(#gc)"/><ellipse cx="5" cy="2.200" rx="4.500" ry="1.800" fill="#dcecf8" stroke="#6c9cc4" stroke-width=".6"/><circle cx="11" cy="9.5" r="2.300" fill="#f8d040" stroke="#c88a10" stroke-width=".9"/><circle cx="8.8" cy="13.3" r="2.300" fill="#f8d040" stroke="#c88a10" stroke-width=".9"/><circle cx="13.3" cy="13.3" r="2.300" fill="#f8d040" stroke="#c88a10" stroke-width=".9"/></svg>
<div class="nx ti" style="top:514px;transform:scaleX(.91)">Внешние источники данных</div>
<div id="mdi"></div><div style="left:263px;top:105px;width:1110px;height:1px;background:#9c9c9c"></div><div style="left:263px;top:105px;width:1px;height:433px;background:#9c9c9c"></div><div style="left:263px;top:538px;width:1110px;height:2px;background:#fbf9ec"></div><div id="cw"></div>
<svg style="left:272px;top:114px" width="13" height="13" viewBox="0 0 13 13"><path d="M0 0.500h7M0 2.500h5M0 4.500h6M0 6.500h4M0 8.500h3" stroke="#707070"/><path d="M9 0.500h3.500v12h-10.500v-2" fill="none" stroke="#606060"/></svg>
<div class="nx" style="left:290px;top:113px;font-size:11.500px;font-weight:bold;color:#1a1a1a;transform:scaleX(1.036)">Общий модуль ЭлектронноеВзаимодействиеБЗК: Модуль [Только для чтения]</div>
<div style="left:1305px;top:123px;width:8px;height:2px;background:#202020"></div>
<div style="left:1323px;top:114px;width:11px;height:11px;border:1px solid #202020;border-top-width:2px"></div>
<svg style="left:1344px;top:114px" width="11" height="11" viewBox="0 0 11 11"><path d="M1 1l9 9M10 1l-9 9" stroke="#202020" stroke-width="1.600"/></svg>
<div id="code"></div>
<div class="stip" style="left:269px;top:130px;width:16px;height:366px"></div><div id="fold"></div>
<div class="sbv" style="left:1343px;top:130px;width:17px;height:366px"></div>
<div class="sbb" style="left:1343px;top:130px;width:17px;height:21px"></div><div class="sbb" style="left:1343px;top:475px;width:17px;height:21px"></div>
<div class="sbb" style="left:1343px;top:213px;width:17px;height:76px"></div><div style="left:1350px;top:250px;width:3px;height:3px;border-radius:50%;border:1px solid #c4c0b0"></div>
<svg style="left:1348px;top:136px" width="7" height="7" viewBox="0 0 7 7"><path d="M3.500 0l3.500 7h-7z" fill="#959595"/></svg>
<svg style="left:1348px;top:482px" width="7" height="7" viewBox="0 0 7 7"><path d="M3.500 7l3.500-7h-7z" fill="#959595"/></svg>
<div style="left:269px;top:496px;width:1091px;height:16px;background:#fbfaf5;border-top:1px solid #d5cfb0"></div>
<div class="sbb" style="left:269px;top:496px;width:21px;height:16px;background:linear-gradient(#fbfaf1,#ece7c9)"></div><div class="sbb" style="left:1322px;top:496px;width:21px;height:16px;background:linear-gradient(#fbfaf1,#ece7c9)"></div>
<div class="sbb" style="left:289px;top:496px;width:955px;height:16px;background:linear-gradient(#fbfaf1,#ece7c9)"></div>
<div style="left:765px;top:502px;width:3px;height:3px;border-radius:50%;border:1px solid #c4c0b0"></div>
<svg style="left:275px;top:501px" width="7" height="7" viewBox="0 0 7 7"><path d="M0 3.500l7-3.500v7z" fill="#bcbcbc"/></svg>
<svg style="left:1330px;top:501px" width="7" height="8" viewBox="0 0 7 8"><path d="M7 4l-7-4v8z" fill="#909090"/></svg>
<pre id="src">
<span class="c">////////////////////////////////////////////////////////////////////////////////</span>
<span class="c">// Получение данных</span>

<span class="c">// См. ЭлектронноеВзаимодействиеПереопределяемый.НайтиСсылкуНаОбъект.</span>
<span class="k">Процедура</span> <span class="i">НайтиСсылкуНаОбъект</span><span class="k">(</span><span class="i">ТипОбъекта</span><span class="k">,</span> <span class="i">Результат</span><span class="k">,</span> <span class="i">ИдОбъекта</span> <span class="k">=</span> <span class="s">""</span><span class="k">,</span> <span class="i">ДополнительныеРеквизиты</span> <span class="k">= Неопределено,</span> <span class="i">ИДЭД</span> <span class="k">= Неопределено)</span>

<span class="c">// См. ЭлектронноеВзаимодействиеПереопределяемый.ПолучитьПечатныйНомерДокумента.</span>
<span class="k">Процедура</span> <span class="i">ПолучитьПечатныйНомерДокумента</span><span class="k">(</span><span class="i">СсылкаНаОбъект</span><span class="k">,</span> <span class="i">Результат</span><span class="k">) Экспорт</span>

    <span class="i">Результат</span> <span class="k">=</span>
        <span class="i">ПрефиксацияОбъектовКлиентСервер</span><span class="k">.</span><span class="i">НомерНаПечать</span><span class="k">(</span>
            <span class="i">ОбщегоНазначения</span><span class="k">.</span><span class="i">ЗначениеРеквизитаОбъекта</span><span class="k">(</span><span class="i">СсылкаНаОбъект</span><span class="k">,</span> <span class="s">"Номер"</span><span class="k">),</span>
            <span class="k">Истина,</span>
            <span class="k">Ложь);</span>

<span class="k">КонецПроцедуры</span>

<span class="c">// См. ЭлектронноеВзаимодействиеПереопределяемый.ПроверитьГотовностьИсточников.</span>
<span class="k">Процедура</span> <span class="i">ПроверитьГотовностьИсточников</span><span class="k">(</span><span class="i">ДокументыМассив</span><span class="k">,</span> <span class="i">БезЭлектроннойПодписи</span> <span class="k">= Ложь) Экспорт</span>

<span class="c">// См. ЭлектронноеВзаимодействиеПереопределяемый.ПолучитьДанныеЮрФизЛица.</span>
<span class="k">Процедура</span> <span class="i">ПолучитьДанныеЮрФизЛица</span><span class="k">(</span><span class="i">ЮрФизЛицо</span><span class="k">,</span> <span class="i">Сведения</span><span class="k">) Экспорт</span>
</pre>

<div class="fb p" style="top:214px"></div>
<div class="fb" style="top:262px"></div>
<div class="fb p" style="top:438px"></div>
<div class="fb p" style="top:486px"></div>
<div style="left:294px;top:394px;width:4px;height:1px;background:#404040"></div>
<div class="dots" style="left:1066px;top:434px"></div><div class="dots" style="left:810px;top:482px;height:14px;border-bottom:0"></div>
<div style="left:576px;top:274px;width:2px;height:16px;background:#000"></div>
<div id="bp-h"><div class="nx" style="left:3px;top:1px;font-weight:bold;color:#35260c;transform:scaleX(.98)">Служебные сообщения</div></div>
<svg style="left:1345px;top:549px" width="6" height="9" viewBox="0 0 6 9"><rect x="1.400" y="0.500" width="3.200" height="5" rx="1.400" fill="none" stroke="#fff" stroke-width=".9"/><path d="M3 5.500v2.500" stroke="#fff" stroke-width=".9"/></svg>
<svg style="left:1360px;top:547px" width="11" height="11" viewBox="0 0 11 11"><path d="M1 1l9 9M10 1l-9 9" stroke="#3a2800" stroke-width="1.900"/></svg>
<div id="bp"></div><div class="stip" style="left:10px;top:562px;width:17px;height:108px"></div>
<div style="left:10px;top:565px;font-family:'Liberation Mono',monospace;font-weight:bold;font-size:9px;line-height:11px;color:#c00000;white-space:nowrap">err</div>
<pre id="msg">{ОбщийМодуль.ЭлектронноеВзаимодействиеБЗК.Модуль(105,32)}: Переменная не определена (ЭлектронноеВзаимодействиеСлужебныйВызовСервера)
<span style="display:inline-block;width:95px"></span>ИмяПрикладногоСправочника = &lt;&lt;?&gt;&gt;ЭлектронноеВзаимодействиеСлужебныйВызовСервера.ИмяПрикладногоСправочника(ТипОбъекта);</pre>

</body>
</html>
